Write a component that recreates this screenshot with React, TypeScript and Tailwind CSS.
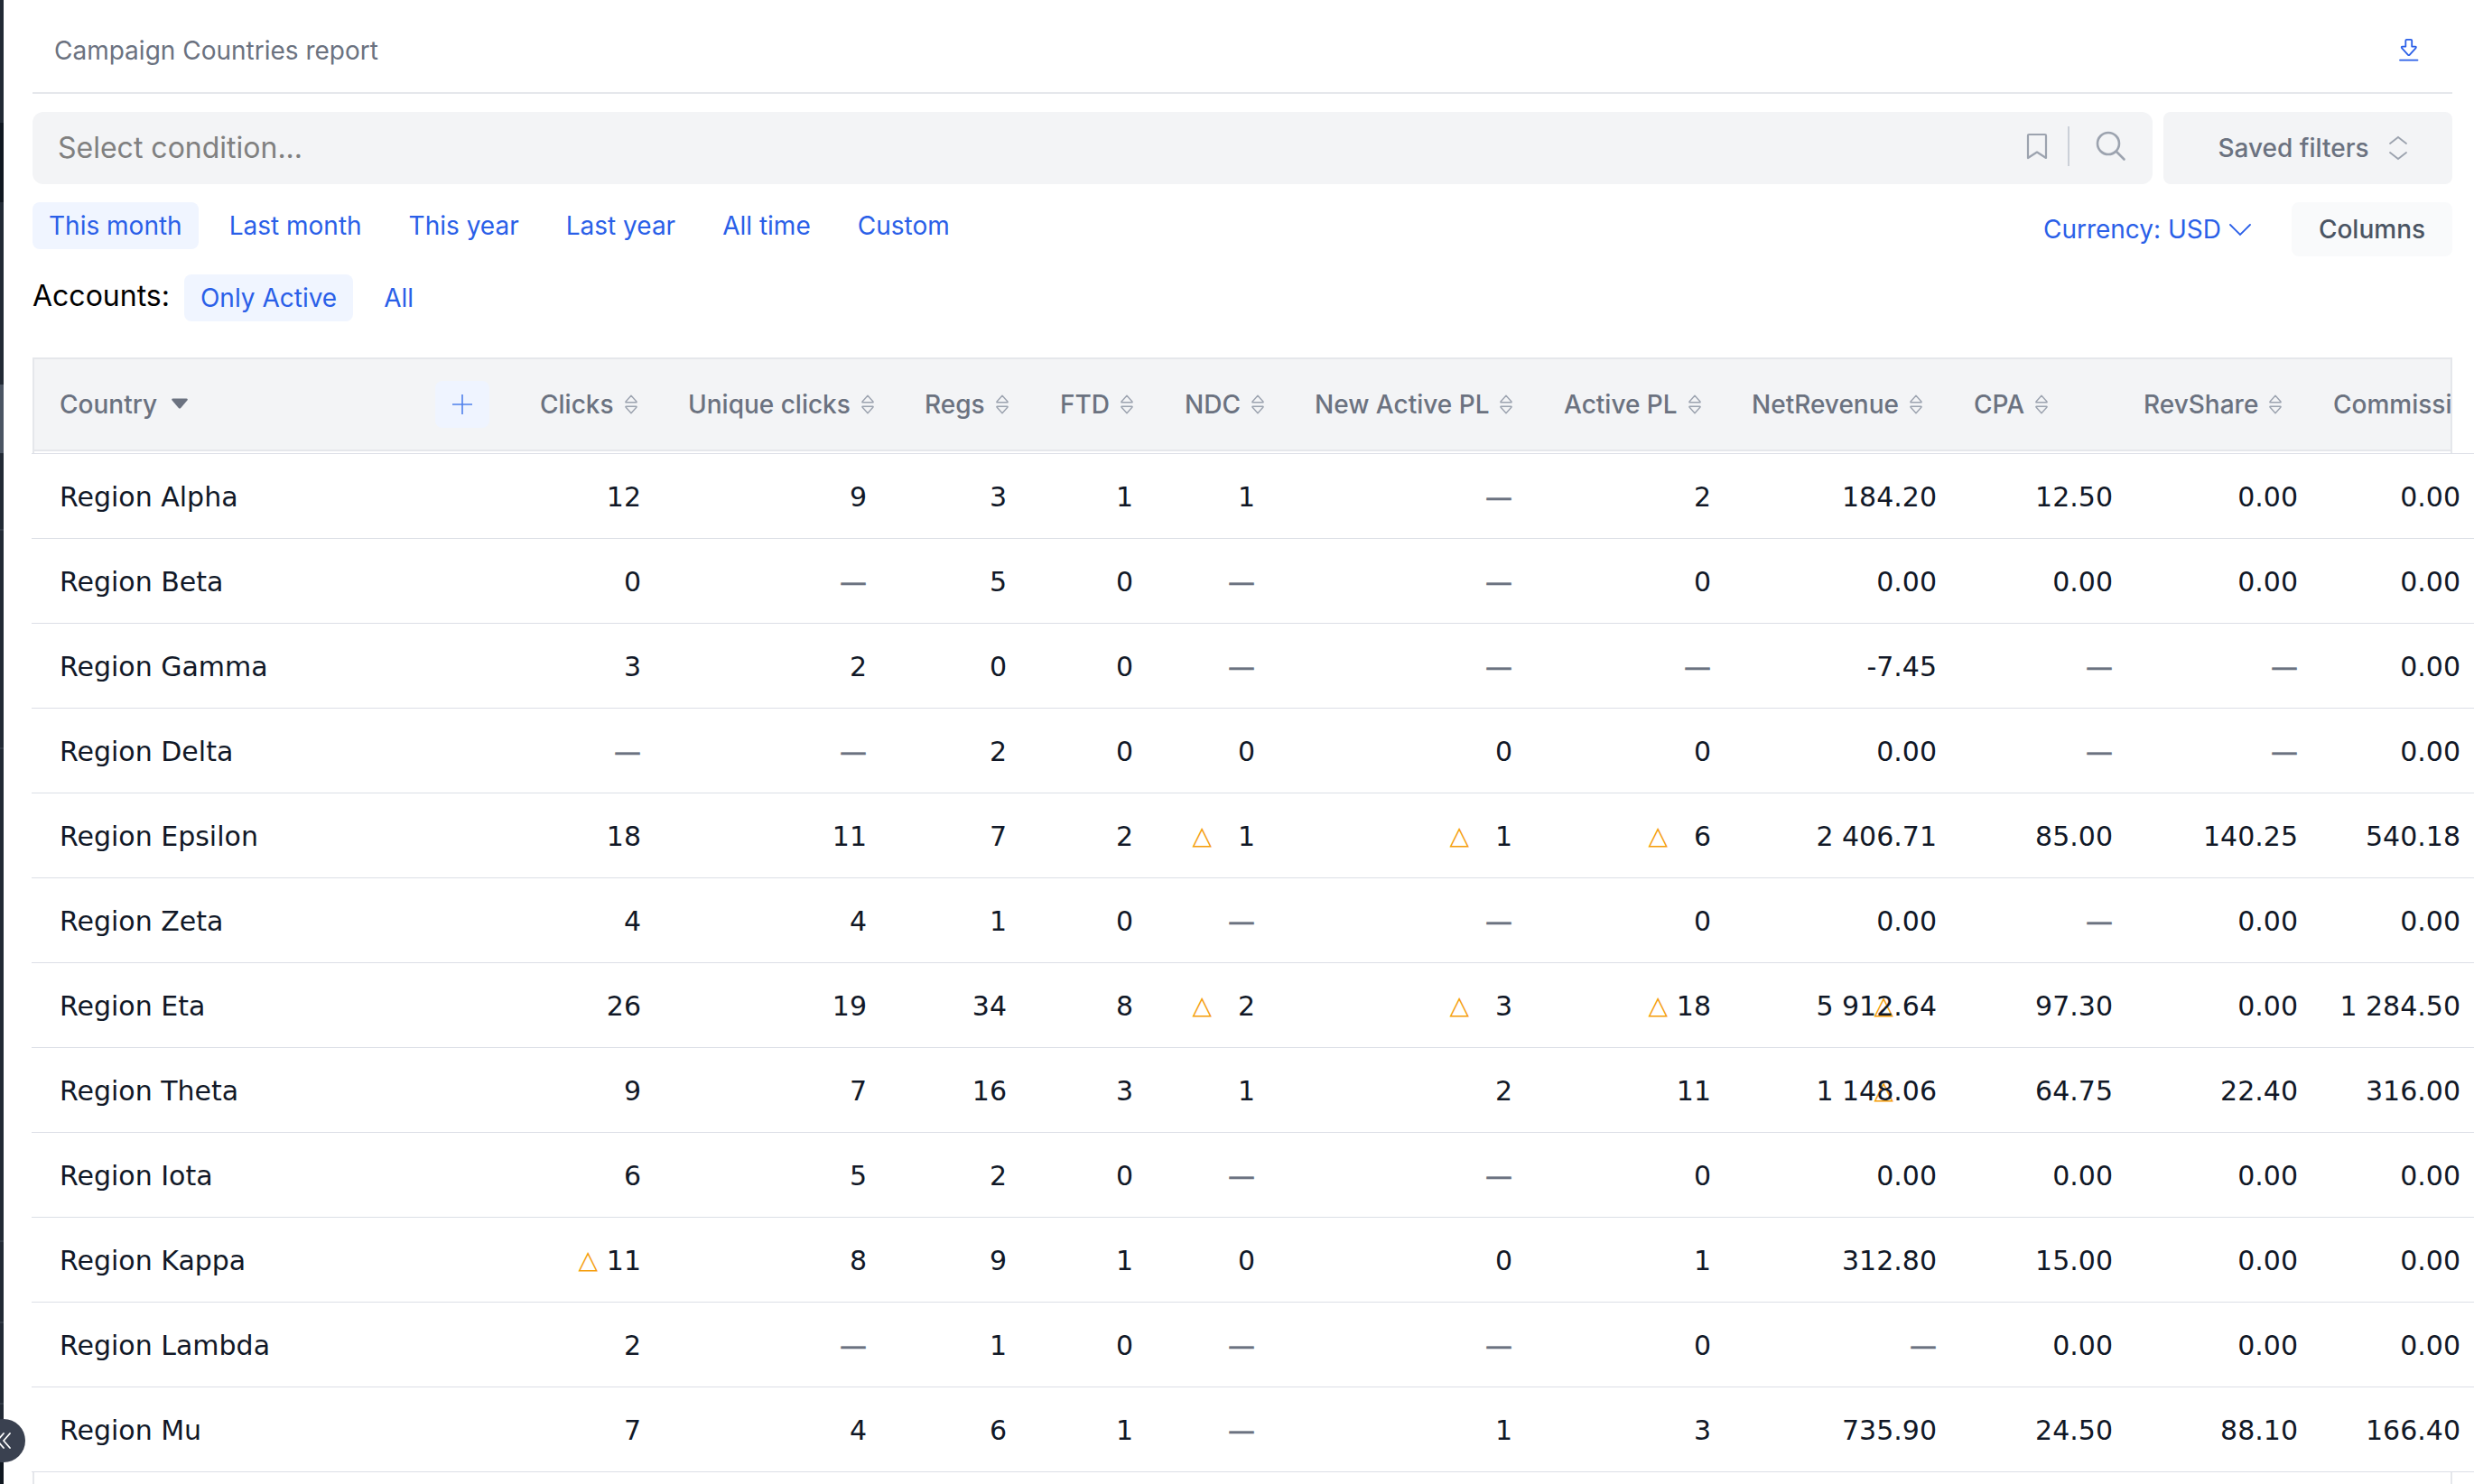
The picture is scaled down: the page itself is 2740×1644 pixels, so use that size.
import React from 'react';
import clsx from 'clsx';

interface Column {
  label: string;
  head: string;
  cell: string;
}

interface Row {
  name: string;
  values: string[];
  warn?: number[];
}

const columns: Column[] = [
  { label: 'Clicks', head: 'w-[164px]', cell: 'w-[188px]' },
  { label: 'Unique clicks', head: 'w-[262px]', cell: 'w-[250px]' },
  { label: 'Regs', head: 'w-[150px]', cell: 'w-[155px]' },
  { label: 'FTD', head: 'w-[138px]', cell: 'w-[140px]' },
  { label: 'NDC', head: 'w-[144px]', cell: 'w-[135px]' },
  { label: 'New Active PL', head: 'w-[276px]', cell: 'w-[285px]' },
  { label: 'Active PL', head: 'w-[208px]', cell: 'w-[220px]' },
  { label: 'NetRevenue', head: 'w-[246px]', cell: 'w-[250px]' },
  { label: 'CPA', head: 'w-[188px]', cell: 'w-[195px]' },
  { label: 'RevShare', head: 'w-[210px]', cell: 'w-[205px]' },
  { label: 'Commissions', head: 'w-[240px]', cell: 'w-[180px]' },
];

const rows: Row[] = [
  { name: 'Region Alpha', values: ['12', '9', '3', '1', '1', '—', '2', '184.20', '12.50', '0.00', '0.00'] },
  { name: 'Region Beta', values: ['0', '—', '5', '0', '—', '—', '0', '0.00', '0.00', '0.00', '0.00'] },
  { name: 'Region Gamma', values: ['3', '2', '0', '0', '—', '—', '—', '-7.45', '—', '—', '0.00'] },
  { name: 'Region Delta', values: ['—', '—', '2', '0', '0', '0', '0', '0.00', '—', '—', '0.00'] },
  { name: 'Region Epsilon', values: ['18', '11', '7', '2', '1', '1', '6', '2 406.71', '85.00', '140.25', '540.18'], warn: [4, 5, 6] },
  { name: 'Region Zeta', values: ['4', '4', '1', '0', '—', '—', '0', '0.00', '—', '0.00', '0.00'] },
  { name: 'Region Eta', values: ['26', '19', '34', '8', '2', '3', '18', '5 912.64', '97.30', '0.00', '1 284.50'], warn: [4, 5, 6, 7] },
  { name: 'Region Theta', values: ['9', '7', '16', '3', '1', '2', '11', '1 148.06', '64.75', '22.40', '316.00'], warn: [7] },
  { name: 'Region Iota', values: ['6', '5', '2', '0', '—', '—', '0', '0.00', '0.00', '0.00', '0.00'] },
  { name: 'Region Kappa', values: ['11', '8', '9', '1', '0', '0', '1', '312.80', '15.00', '0.00', '0.00'], warn: [0] },
  { name: 'Region Lambda', values: ['2', '—', '1', '0', '—', '—', '0', '—', '0.00', '0.00', '0.00'] },
  { name: 'Region Mu', values: ['7', '4', '6', '1', '—', '1', '3', '735.90', '24.50', '88.10', '166.40'] },
];

const periods = ['This month', 'Last month', 'This year', 'Last year', 'All time', 'Custom'];

const SortIcon = () => (
  <svg width="16" height="24" viewBox="0 0 16 24" fill="none" stroke="#9ca3af" strokeWidth="1.4" strokeLinejoin="round">
    <path d="M8 2.2 L14 9 Q14.4 9.8 13.5 9.8 H2.5 Q1.6 9.8 2 9 Z" />
    <path d="M8 21.8 L14 15 Q14.4 14.2 13.5 14.2 H2.5 Q1.6 14.2 2 15 Z" />
  </svg>
);

const Pill: React.FC<{ label: string; active?: boolean }> = ({ label, active }) => (
  <button className={clsx('h-[52px] rounded-lg px-[18px] text-[28px] leading-none text-[#2a5fe8]', active && 'bg-[#f0f5ff]')}>
    {label}
  </button>
);

// only the right edge of the collapsed menu is on screen
const Sidebar = () => (
  <aside className="relative flex w-1 shrink-0 flex-col bg-[#222a35]">
    <div className="h-[136px]" />
    <div className="h-[88px] bg-[#0f1720]" />
    <div className="h-[202px]" />
    <div className="h-[76px] bg-[#4b5563]" />
    <div className="h-[86px] border-b-2 border-[#323a46]" />
    <div className="h-[242px] border-b-2 border-[#323a46]" />
    <div className="h-[546px] border-b-2 border-[#323a46]" />
    <div className="h-[90px] border-b-2 border-[#323a46]" />
    <div className="h-[90px] border-b-2 border-[#323a46]" />
    <div className="h-[64px]" />
    <div className="grow bg-[#0f1720]" />
    <button className="absolute top-[1572px] -left-5 z-10 h-12 w-12 rounded-full bg-[#3a4150]">
      <svg className="absolute top-[14px] left-[15px]" width="20" height="20" viewBox="0 0 20 20" fill="none" stroke="#fff" strokeWidth="1.8" strokeLinecap="round" strokeLinejoin="round">
        <path d="M9 2 L2 10 L9 18 M16 2 L9 10 L16 18" />
      </svg>
    </button>
  </aside>
);

const Table = () => (
  <div className="mt-10 ml-8">
    <div className="mr-6 flex h-[106px] overflow-hidden border-2 border-b-0 border-[#e5e7eb]">
      <div className="flex h-[102px] w-[2800px] shrink-0 items-center border-b-2 border-[#e5e7eb] bg-[#f3f4f6] text-[28px] font-medium text-[#6b7280]">
        <div className="flex w-[560px] shrink-0 items-center pl-7">
          Country
          <svg className="ml-[15px]" width="20" height="14" viewBox="0 0 20 14" fill="#6b7280">
            <path d="M2.5 0.5 H17.5 Q19.5 0.8 18.4 2.4 L11.2 11 Q10 12.2 8.8 11 L1.6 2.4 Q0.5 0.8 2.5 0.5 Z" />
          </svg>
          <span className="mr-[56px] ml-auto flex h-[52px] w-[60px] items-center justify-center rounded-lg bg-[#eff4ff]">
            <svg width="24" height="24" viewBox="0 0 24 24" stroke="#4f80ec" strokeWidth="1.6">
              <path d="M12 1 V23 M1 12 H23" />
            </svg>
          </span>
        </div>
        {columns.map(col => (
          <div key={col.label} className={clsx('flex shrink-0 items-center gap-[11px] whitespace-nowrap', col.head)}>
            {col.label}
            <SortIcon />
          </div>
        ))}
      </div>
    </div>
    <div className="-ml-px overflow-hidden bg-white">
      {rows.map(row => (
        <div key={row.name} className="flex h-[94px] items-center border-t border-[#dcdfe6] pt-0.5 font-['DejaVu_Sans',sans-serif] text-[30px] text-[#111827]">
          <div className="w-[487px] shrink-0 pl-[31px]">{row.name}</div>
          {row.values.map((value, i) => (
            <div key={columns[i].label} className={clsx('relative shrink-0 whitespace-nowrap text-right', columns[i].cell)}>
              {row.warn?.includes(i) && <span className="absolute top-px right-[48px] text-[28px] text-[#f59e0b]">△</span>}
              <span className={clsx('relative', value === '—' && 'text-[#6b7280] [-webkit-text-stroke:0.5px_#6b7280]')}>{value}</span>
            </div>
          ))}
        </div>
      ))}
    </div>
    <div className="-ml-px border-t border-[#dcdfe6]">
      <div className="mr-6 ml-px h-4 border-x-2 border-[#e5e7eb]" />
    </div>
  </div>
);

const App: React.FC = () => {
  return (
    <div className="flex h-[1644px] w-[2740px] overflow-hidden bg-white font-['Inter',sans-serif]">
      <Sidebar />
      <main className="w-[2736px] shrink-0">
        <header className="mr-6 ml-8 flex h-[104px] items-center justify-between border-b-2 border-[#e5e7eb] pt-2.5 pr-9 pl-6">
          <h1 className="text-[28px] text-[#6b7280]">Campaign Countries report</h1>
          <svg width="24" height="28" viewBox="0 0 24 28" fill="none" stroke="#2a5fe8" strokeWidth="1.8" strokeLinejoin="round">
            <path d="M8.3 3 Q8.3 1.8 9.5 1.8 H14 Q15.2 1.8 15.2 3 V9.6 H18.8 Q20.6 9.8 19.4 11.4 L12.6 18.8 Q11.8 19.6 11 18.8 L4.2 11.4 Q3 9.8 4.8 9.6 H8.3 Z" />
            <path d="M2 24.6 H21.5" strokeLinecap="round" />
          </svg>
        </header>

        <div className="mt-5 mr-6 ml-8 flex h-20 gap-3">
          <div className="flex grow items-center rounded-xl bg-[#f3f4f6] pr-7 pl-7">
            <span className="grow text-[32px] text-[#808080]">Select condition...</span>
            <svg className="-mt-1" width="24" height="30" viewBox="0 0 24 30" fill="none" stroke="#9ca3af" strokeWidth="2.2" strokeLinejoin="round">
              <path d="M2 3.2 Q2 2 3.2 2 H20.8 Q22 2 22 3.2 V28 L12 21.5 L2 28 Z" />
            </svg>
            <div className="mr-[28px] ml-[22px] h-11 w-0.5 -translate-y-0.5 bg-[#cbd0d8]" />
            <svg className="-mt-1" width="36" height="36" viewBox="0 0 36 36" fill="none" stroke="#9ca3af" strokeWidth="2.6" strokeLinecap="round">
              <circle cx="15" cy="15" r="12" />
              <path d="M24 24 L32.5 32.5" />
            </svg>
          </div>
          <button className="flex w-[320px] items-center justify-center gap-5 rounded-lg bg-[#f3f4f6] pl-3 text-[28px] font-medium text-[#6b7280]">
            Saved filters
            <svg width="24" height="28" viewBox="0 0 24 28" fill="none" stroke="#9ca3af" strokeWidth="1.8" strokeLinecap="round">
              <path d="M3 9 L12 2 L21 9 M3 19 L12 26 L21 19" />
            </svg>
          </button>
        </div>

        <div className="mt-5 mr-6 ml-8 flex h-[60px] items-start justify-between">
          <div className="flex gap-4">
            {periods.map((period, i) => (
              <Pill key={period} label={period} active={i === 0} />
            ))}
          </div>
          <div className="flex items-center">
            <button className="mr-[44px] flex items-center gap-2 text-[28px] text-[#2a5fe8]">
              Currency: USD
              <svg width="26" height="16" viewBox="0 0 26 16" fill="none" stroke="#2a5fe8" strokeWidth="1.8" strokeLinecap="round">
                <path d="M2 3 L13 14 L24 3" />
              </svg>
            </button>
            <button className="h-[60px] w-[178px] rounded-lg bg-[#f9fafb] text-[28px] font-medium text-[#4b5563]">Columns</button>
          </div>
        </div>

        <div className="mt-5 ml-8 flex h-[52px] items-center gap-4">
          <span className="-mt-1 text-[32px] text-black">Accounts:</span>
          <div className="flex gap-4">
            <Pill label="Only Active" active />
            <Pill label="All" />
          </div>
        </div>

        <Table />
      </main>
    </div>
  );
};

export default App;
